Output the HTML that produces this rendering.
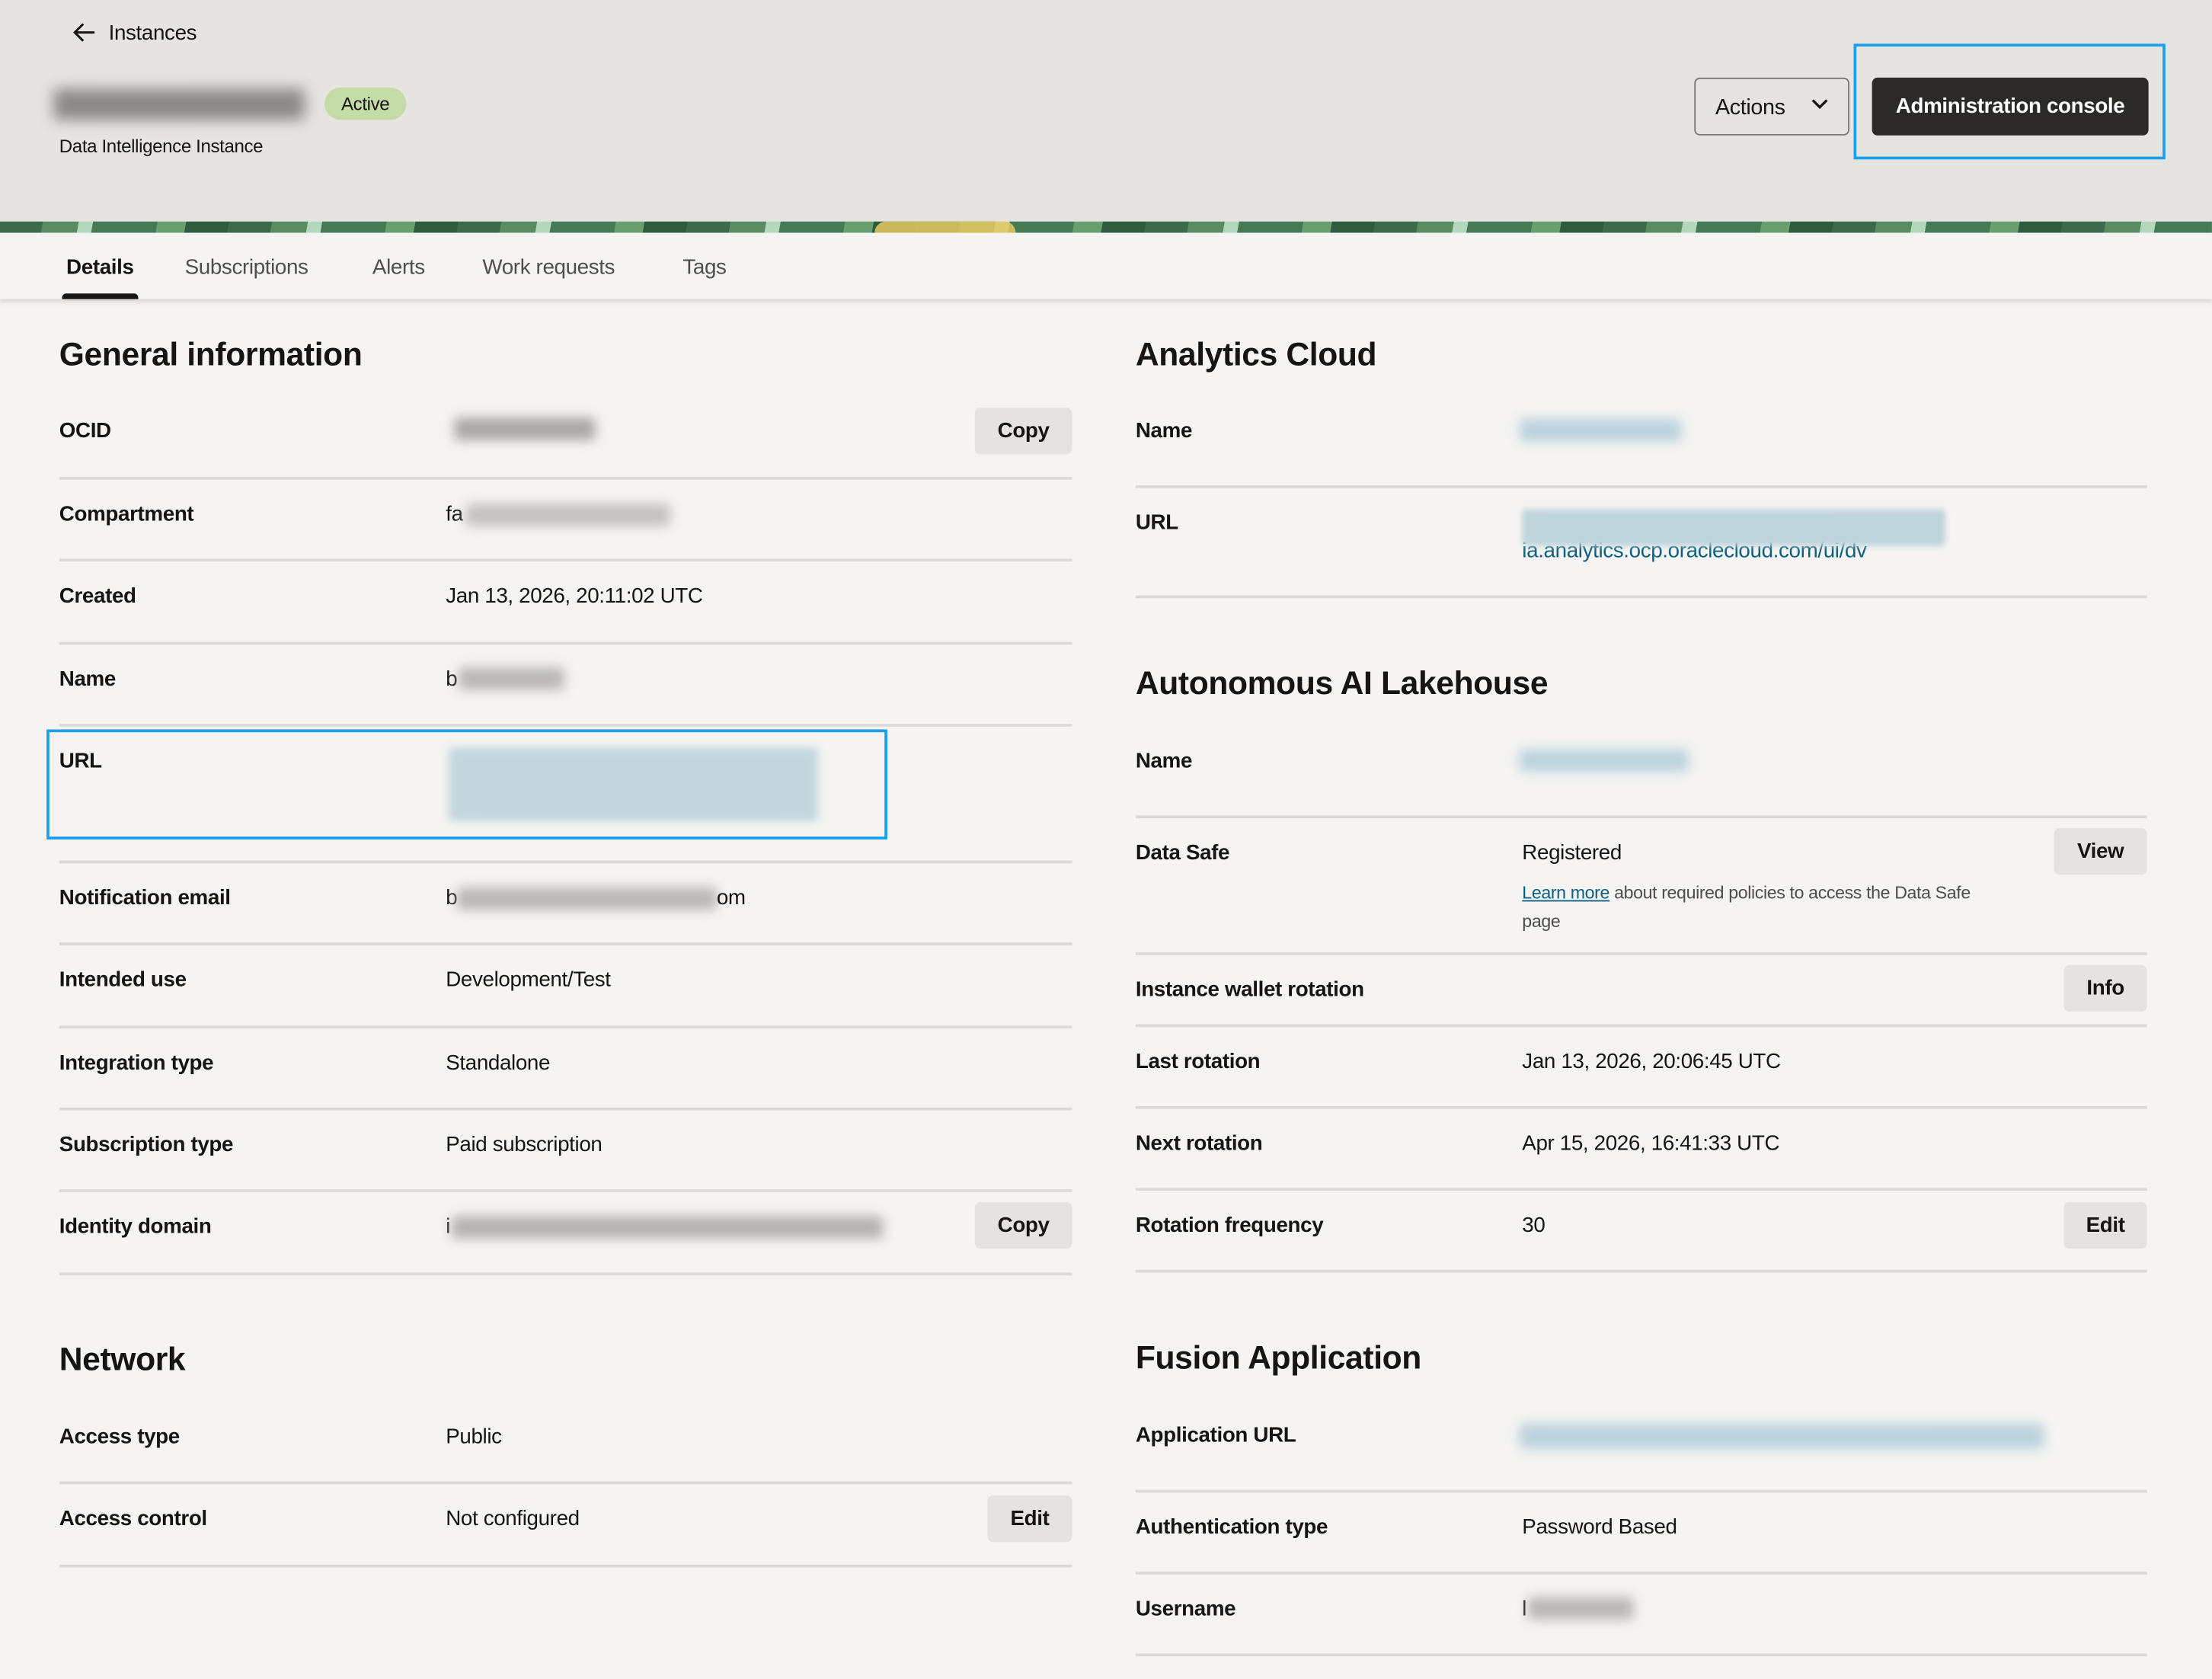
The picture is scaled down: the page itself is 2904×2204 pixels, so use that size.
<!DOCTYPE html>
<html><head><meta charset="utf-8"><style>
*{margin:0;padding:0;box-sizing:border-box}
html,body{width:2904px;height:2204px;overflow:hidden;background:#f5f4f2}
#w{position:absolute;left:0;top:0;width:1568px;height:1190px;transform:scale(1.852);transform-origin:0 0;font-family:"Liberation Sans",sans-serif;color:#161513;font-size:15px;letter-spacing:-0.2px}
.a{position:absolute;white-space:nowrap}
.t{position:absolute;white-space:nowrap;line-height:20px;height:20px;margin-top:1px}
.b{font-weight:bold}
.h{position:absolute;font-size:23px;font-weight:bold;line-height:30px;white-space:nowrap}
.sep{position:absolute;height:2px;background:#dcdad6}
.btn{position:absolute;background:#e4e3df;border-radius:4px;font-weight:bold;font-size:15px;text-align:center;line-height:33px;height:33px}
.bl{position:absolute;filter:blur(4px);border-radius:3px}
.lnk{color:#0a6080}
</style></head><body><div id="w">
<div class="a" style="left:0;top:0;width:1568px;height:157px;background:#e5e4e0"></div>
<div class="a" style="left:0;top:157px;width:1568px;height:8px;background:repeating-linear-gradient(100deg,#3d6a4a 0 30px,#5a8c62 30px 55px,#b4d8bd 55px 65px,#467a55 65px 110px,#6aa06f 110px 130px,#2f5c3f 130px 160px);"></div>
<div class="a" style="left:620px;top:157px;width:100px;height:8px;background:#e6c860;border-radius:8px 8px 0 0;opacity:.85"></div>
<div class="a" style="left:0;top:165px;width:1568px;height:47px;background:#f5f4f2;box-shadow:0 2px 3px rgba(0,0,0,.12)"></div>

<svg class="a" style="left:51px;top:15px" width="18" height="16" viewBox="0 0 18 16"><path d="M16 8H2M8 2L2 8l6 6" fill="none" stroke="#161513" stroke-width="1.6"/></svg>
<div class="t" style="left:77px;top:13px;font-size:15px">Instances</div>
<div class="bl" style="left:38px;top:63px;width:178px;height:22px;background:#8a8985;filter:blur(5px)"></div>
<div class="a" style="left:230px;top:62px;width:58px;height:23px;background:#c6dca8;border-radius:12px;font-size:13px;line-height:23px;text-align:center">Active</div>
<div class="t" style="left:42px;top:93px;font-size:13px">Data Intelligence Instance</div>

<div class="a" style="left:1201px;top:55px;width:110px;height:41px;border:1px solid #7a7874;border-radius:4px;"></div>
<div class="t" style="left:1216px;top:66px;font-size:15.5px">Actions</div>
<svg class="a" style="left:1283px;top:69px" width="14" height="10" viewBox="0 0 14 10"><path d="M2 2l5 5 5-5" fill="none" stroke="#161513" stroke-width="1.8"/></svg>
<div class="a" style="left:1327px;top:55px;width:196px;height:41px;background:#2b2a28;border-radius:4px;color:#fff;font-weight:bold;font-size:15px;line-height:41px;text-align:center">Administration console</div>
<div class="a" style="left:1314px;top:31px;width:221px;height:82px;border:2px solid #1a9ff0"></div>

<div class="t" style="left:47px;top:179px;font-weight:bold">Details</div>
<div class="t" style="left:131px;top:179px;color:#504e4a">Subscriptions</div>
<div class="t" style="left:264px;top:179px;color:#504e4a">Alerts</div>
<div class="t" style="left:342px;top:179px;color:#504e4a">Work requests</div>
<div class="t" style="left:484px;top:179px;color:#504e4a">Tags</div>
<div class="a" style="left:44px;top:208px;width:54px;height:4px;background:#161513;border-radius:3px 3px 0 0"></div>

<!-- Left column -->
<div class="h" style="left:42px;top:236px">General information</div>
<div class="t b" style="left:42px;top:295px">OCID</div>
<div class="bl" style="left:322px;top:296px;width:100px;height:16px;background:#a9a8a4"></div>
<div class="btn" style="left:691px;top:289px;width:69px">Copy</div>
<div class="sep" style="left:42px;top:338px;width:718px"></div>
<div class="t b" style="left:42px;top:354px">Compartment</div>
<div class="t" style="left:316px;top:354px">fa</div>
<div class="bl" style="left:330px;top:357px;width:145px;height:16px;background:#c3c2be"></div>
<div class="sep" style="left:42px;top:396px;width:718px"></div>
<div class="t b" style="left:42px;top:412px">Created</div>
<div class="t" style="left:316px;top:412px">Jan 13, 2026, 20:11:02 UTC</div>
<div class="sep" style="left:42px;top:455px;width:718px"></div>
<div class="t b" style="left:42px;top:471px">Name</div>
<div class="t" style="left:316px;top:471px">b</div>
<div class="bl" style="left:325px;top:473px;width:75px;height:16px;background:#b9b8b4"></div>
<div class="sep" style="left:42px;top:513px;width:718px"></div>
<div class="t b" style="left:42px;top:529px">URL</div>
<div class="bl" style="left:318px;top:530px;width:262px;height:52px;background:#c3d6de;filter:blur(3px)"></div>
<div class="a" style="left:33px;top:517px;width:596px;height:78px;border:2px solid #1a9ff0"></div>
<div class="sep" style="left:42px;top:610px;width:718px"></div>
<div class="t b" style="left:42px;top:626px">Notification email</div>
<div class="t" style="left:316px;top:626px">b</div>
<div class="bl" style="left:324px;top:629px;width:184px;height:16px;background:#b9b8b4"></div>
<div class="t" style="left:508px;top:626px">om</div>
<div class="sep" style="left:42px;top:668px;width:718px"></div>
<div class="t b" style="left:42px;top:684px">Intended use</div>
<div class="t" style="left:316px;top:684px">Development/Test</div>
<div class="sep" style="left:42px;top:727px;width:718px"></div>
<div class="t b" style="left:42px;top:743px">Integration type</div>
<div class="t" style="left:316px;top:743px">Standalone</div>
<div class="sep" style="left:42px;top:785px;width:718px"></div>
<div class="t b" style="left:42px;top:801px">Subscription type</div>
<div class="t" style="left:316px;top:801px">Paid subscription</div>
<div class="sep" style="left:42px;top:843px;width:718px"></div>
<div class="t b" style="left:42px;top:859px">Identity domain</div>
<div class="t" style="left:316px;top:859px">i</div>
<div class="bl" style="left:320px;top:862px;width:306px;height:16px;background:#b4b3af"></div>
<div class="btn" style="left:691px;top:852px;width:69px">Copy</div>
<div class="sep" style="left:42px;top:902px;width:718px"></div>

<div class="h" style="left:42px;top:948px">Network</div>
<div class="t b" style="left:42px;top:1008px">Access type</div>
<div class="t" style="left:316px;top:1008px">Public</div>
<div class="sep" style="left:42px;top:1050px;width:718px"></div>
<div class="t b" style="left:42px;top:1066px">Access control</div>
<div class="t" style="left:316px;top:1066px">Not configured</div>
<div class="btn" style="left:700px;top:1060px;width:60px">Edit</div>
<div class="sep" style="left:42px;top:1109px;width:718px"></div>

<!-- Right column -->
<div class="h" style="left:805px;top:236px">Analytics Cloud</div>
<div class="t b" style="left:805px;top:295px">Name</div>
<div class="bl" style="left:1077px;top:297px;width:115px;height:16px;background:#bcd2dc"></div>
<div class="sep" style="left:805px;top:344px;width:717px"></div>
<div class="t b" style="left:805px;top:360px">URL</div>
<div class="t lnk" style="left:1079px;top:380px;font-size:15px">ia.analytics.ocp.oraclecloud.com/ui/dv</div>
<div class="bl" style="left:1079px;top:361px;width:300px;height:26px;background:#bfd3db;filter:blur(2px)"></div>
<div class="sep" style="left:805px;top:422px;width:717px"></div>

<div class="h" style="left:805px;top:469px">Autonomous AI Lakehouse</div>
<div class="t b" style="left:805px;top:529px">Name</div>
<div class="bl" style="left:1077px;top:531px;width:120px;height:16px;background:#bcd2dc"></div>
<div class="sep" style="left:805px;top:578px;width:717px"></div>
<div class="t b" style="left:805px;top:594px">Data Safe</div>
<div class="t" style="left:1079px;top:594px">Registered</div>
<div class="t" style="left:1079px;top:622px;font-size:12.5px;color:#4f4d49"><span class="lnk" style="text-decoration:underline">Learn more</span> about required policies to access the Data Safe</div>
<div class="t" style="left:1079px;top:642px;font-size:12.5px;color:#4f4d49">page</div>
<div class="btn" style="left:1456px;top:587px;width:66px">View</div>
<div class="sep" style="left:805px;top:675px;width:717px"></div>
<div class="t b" style="left:805px;top:691px">Instance wallet rotation</div>
<div class="btn" style="left:1463px;top:684px;width:59px">Info</div>
<div class="sep" style="left:805px;top:726px;width:717px"></div>
<div class="t b" style="left:805px;top:742px">Last rotation</div>
<div class="t" style="left:1079px;top:742px">Jan 13, 2026, 20:06:45 UTC</div>
<div class="sep" style="left:805px;top:784px;width:717px"></div>
<div class="t b" style="left:805px;top:800px">Next rotation</div>
<div class="t" style="left:1079px;top:800px">Apr 15, 2026, 16:41:33 UTC</div>
<div class="sep" style="left:805px;top:842px;width:717px"></div>
<div class="t b" style="left:805px;top:858px">Rotation frequency</div>
<div class="t" style="left:1079px;top:858px">30</div>
<div class="btn" style="left:1463px;top:852px;width:59px">Edit</div>
<div class="sep" style="left:805px;top:900px;width:717px"></div>

<div class="h" style="left:805px;top:947px">Fusion Application</div>
<div class="t b" style="left:805px;top:1007px">Application URL</div>
<div class="bl" style="left:1077px;top:1009px;width:372px;height:18px;background:#bcd2dc"></div>
<div class="sep" style="left:805px;top:1056px;width:717px"></div>
<div class="t b" style="left:805px;top:1072px">Authentication type</div>
<div class="t" style="left:1079px;top:1072px">Password Based</div>
<div class="sep" style="left:805px;top:1114px;width:717px"></div>
<div class="t b" style="left:805px;top:1130px">Username</div>
<div class="t" style="left:1079px;top:1130px">l</div>
<div class="bl" style="left:1083px;top:1132px;width:75px;height:16px;background:#b9b8b4"></div>
<div class="sep" style="left:805px;top:1172px;width:717px"></div>
</div></body></html>
